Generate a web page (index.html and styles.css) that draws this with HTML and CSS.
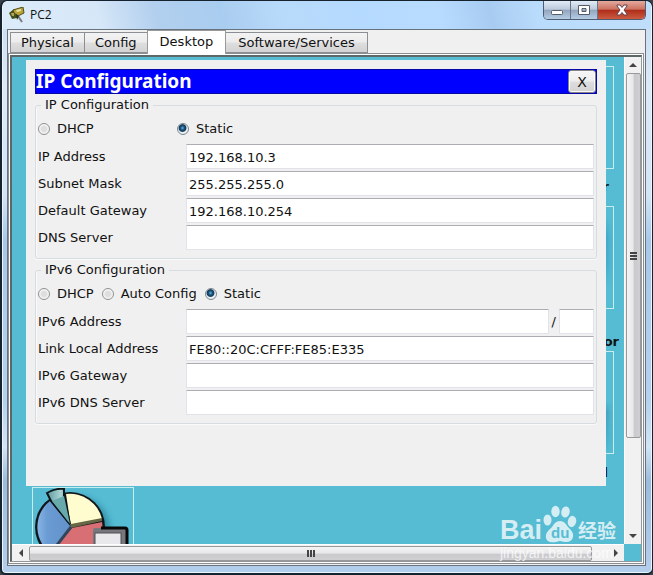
FILE: index.html
```html
<!DOCTYPE html>
<html lang="en">
<head>
<meta charset="utf-8">
<title>PC2</title>
<link rel="stylesheet" href="styles.css">
</head>
<body>
<div class="window">
  <header class="titlebar">
    <svg class="app-icon" width="16" height="16" viewBox="0 0 16 16" aria-hidden="true">
      <path d="M0 6 5 2 11 4 8 11 3 12Z" fill="#43521f"/>
      <path d="M4 3 14 0 15 6 9 9 5 6Z" fill="#b5a23a" stroke="#514d1b"/>
      <path d="M7 3 12 2 12 4 8 5Z" fill="#f0e5a0"/>
      <path d="M2 6 5 6 5 9 3 9Z" fill="#b7a850"/>
      <path d="M9 9 13 15" stroke="#777c80" stroke-width="2"/>
      <path d="M7 7 10 9 8 13Z" fill="#29331d"/>
    </svg>
    <h1 class="window-title">PC2</h1>
    <div class="window-buttons">
      <button class="win-btn" aria-label="Minimize"><svg width="14" height="12" viewBox="0 0 14 12"><rect x="1.500" y="6.500" width="11" height="4" rx="1" fill="#fff" stroke="#555b69"/></svg></button>
      <button class="win-btn" aria-label="Maximize"><svg width="14" height="12" viewBox="0 0 14 12"><path d="M1.500 1.500H12.500V10.500H1.500ZM5 4.500V7.500H9V4.500Z" fill="#fff" fill-rule="evenodd" stroke="#555b69"/></svg></button>
      <button class="win-btn win-close" aria-label="Close"><svg width="14" height="12" viewBox="0 0 14 12"><path d="M2 1H5L7 3.500 9 1H12V2L9 6 12 10V11H9L7 8.500 5 11H2V10L5 6 2 2Z" fill="#fff" stroke="#65414a"/></svg></button>
    </div>
  </header>

  <div class="client">
    <nav class="tabs" role="tablist">
      <button class="tab" role="tab">Physical</button>
      <button class="tab" role="tab">Config</button>
      <button class="tab tab-active" role="tab" aria-selected="true">Desktop</button>
      <button class="tab" role="tab">Software/Services</button>
    </nav>

    <div class="panel">
      <div class="scroll-area">
        <main class="desktop">
          <div class="tile tile-top"></div>
          <span class="caption caption-top">r</span>
          <div class="tile tile-middle"></div>
          <span class="caption caption-middle">or</span>
          <div class="tile tile-bottom"></div>
          <span class="caption caption-bottom">l</span>
          <div class="tile tile-chart">
            <svg width="100" height="74" viewBox="0 0 100 74" aria-hidden="true">
              <defs>
                <linearGradient id="blue" x1="0" x2="1"><stop offset="0" stop-color="#86b4e4"/><stop offset=".3" stop-color="#6a9bd2"/><stop offset="1" stop-color="#6391c9"/></linearGradient>
                <linearGradient id="teal" x1="0" x2="1"><stop offset="0" stop-color="#5f9ca2"/><stop offset=".6" stop-color="#a9d4d4"/><stop offset="1" stop-color="#4b8c92"/></linearGradient>
                <filter id="soft"><feGaussianBlur stdDeviation="3"/></filter>
              </defs>
              <circle cx="43" cy="42" r="34" fill="#1e6f86" opacity=".6" filter="url(#soft)"/>
              <circle cx="37" cy="39" r="35" fill="#10161a"/>
              <path d="M38 39 17 13A33 33 0 0 0 20 67Z" fill="url(#blue)"/>
              <path d="M38 39 33 6A33 33 0 0 1 69 31Z" fill="#fffccf"/>
              <path d="M38 36 69 30V33L38 40Z" fill="#676645"/>
              <path d="M39 40 69 34A33 33 0 0 1 26 71L22 58Z" fill="#d86f74"/>
              <path d="M38 39 24 57" stroke="#31465a" stroke-width="3"/>
              <path d="M14 5Q22 0 31 1L31 8 37 36 18 13Z" fill="url(#teal)" stroke="#0d171a" stroke-width="2"/>
              <path d="M19 13 31 8 37 36Z" fill="#68a9ab"/>
              <path d="M60 74V42Q60 40 62 40H92Q94 40 94 42V74" fill="#76787d"/>
              <path d="M68 40H92Q94 40 94 42V74" fill="none" stroke="#080808" stroke-width="3"/>
              <rect x="62" y="45" width="26" height="30" fill="#e9e9eb" stroke="#4f5053"/>
            </svg>
          </div>

          <section class="dialog" aria-label="IP Configuration">
            <div class="dialog-head">
              <h2 class="dialog-title">IP Configuration</h2>
              <button class="dialog-close">X</button>
            </div>

            <fieldset class="group">
              <legend>IP Configuration</legend>
              <div class="modes modes-wide">
                <label class="mode"><input type="radio" name="ipv4">DHCP</label>
                <label class="mode"><input type="radio" name="ipv4" checked>Static</label>
              </div>
              <div class="fields">
                <label for="ip">IP Address</label><input class="field" id="ip" type="text" value="192.168.10.3">
                <label for="mask">Subnet Mask</label><input class="field" id="mask" type="text" value="255.255.255.0">
                <label for="gateway">Default Gateway</label><input class="field" id="gateway" type="text" value="192.168.10.254">
                <label for="dns">DNS Server</label><input class="field" id="dns" type="text">
              </div>
            </fieldset>

            <fieldset class="group">
              <legend>IPv6 Configuration</legend>
              <div class="modes">
                <label class="mode"><input type="radio" name="ipv6">DHCP</label>
                <label class="mode"><input type="radio" name="ipv6">Auto Config</label>
                <label class="mode"><input type="radio" name="ipv6" checked>Static</label>
              </div>
              <div class="fields">
                <label for="ip6">IPv6 Address</label>
                <div class="prefix-row"><input class="field" id="ip6" type="text"><span>/</span><input class="field field-prefix" type="text" aria-label="Prefix length"></div>
                <label for="local">Link Local Address</label><input class="field" id="local" type="text" value="FE80::20C:CFFF:FE85:E335">
                <label for="gateway6">IPv6 Gateway</label><input class="field" id="gateway6" type="text">
                <label for="dns6">IPv6 DNS Server</label><input class="field" id="dns6" type="text">
              </div>
            </fieldset>
          </section>
        </main>

        <div class="bar bar-v">
          <button class="arrow" aria-label="Scroll up"><svg width="8" height="4" viewBox="0 0 8 4"><path d="M4 0 8 4H0Z"/></svg></button>
          <div class="thumb thumb-v"><svg width="7" height="8" viewBox="0 0 7 8"><path d="M0 0H7V2H0ZM0 3H7V5H0ZM0 6H7V8H0Z"/></svg></div>
          <button class="arrow arrow-end" aria-label="Scroll down"><svg width="8" height="4" viewBox="0 0 8 4"><path d="M0 0H8L4 4Z"/></svg></button>
        </div>
        <div class="bar bar-h">
          <button class="arrow" aria-label="Scroll left"><svg width="4" height="8" viewBox="0 0 4 8"><path d="M4 0V8L0 4Z"/></svg></button>
          <div class="thumb thumb-h"><svg width="8" height="7" viewBox="0 0 8 7"><path d="M0 0H2V7H0ZM3 0H5V7H3ZM6 0H8V7H6Z"/></svg></div>
          <button class="arrow arrow-end" aria-label="Scroll right"><svg width="4" height="8" viewBox="0 0 4 8"><path d="M0 0 4 4 0 8Z"/></svg></button>
        </div>
      </div>
    </div>
  </div>

  <div class="watermark">
    <div class="brand">
      <span class="brand-bai">Bai</span>
      <span class="paw">
        <svg width="34" height="38" viewBox="0 0 34 38" aria-hidden="true"><ellipse cx="4.500" cy="15" rx="4" ry="5.500"/><ellipse cx="12.500" cy="6.500" rx="4.200" ry="5.700"/><ellipse cx="22.500" cy="7" rx="4.200" ry="5.500" transform="rotate(12 22.500 7)"/><ellipse cx="29" cy="16.500" rx="4.200" ry="5.700" transform="rotate(12 29 16.500)"/><path d="M17 16C21 16 23 19 25 22C28 25 31 28 30 32C29 37 24 38 17 36C10 38 4 38 3 33C2 28 6 25 9 22C11 19 13 16 17 16Z"/></svg>
        <span class="brand-du">du</span>
      </span>
      <span class="brand-cn" lang="zh">经验</span>
    </div>
    <div class="brand-url">jingyan.baidu.com</div>
  </div>
</div>
</body>
</html>
```
FILE: styles.css
```css
* {
  box-sizing: border-box;
}

body {
  margin: 0;
  background: #39414a;
  font: 13px/16px "DejaVu Sans", sans-serif;
  color: #111;
}

button,
input {
  font: inherit;
  color: inherit;
  margin: 0;
}

button {
  padding: 0;
}

.window {
  position: relative;
  display: flex;
  flex-direction: column;
  min-height: 100vh;
  padding: 0 6px 7px 5px;
  border: 1px solid #17222f;
  border-width: 1px 1px 2px 2px;
  border-radius: 7px 7px 6px 6px;
  background: linear-gradient(180deg, #c5daf1 0, #dce9f7 15%, #d3e4f6 34%, #a8c8e9 42%, #b5d1ee 70%, #d2e4f5 78%, #9cbbdc 84%, #b4cfec 100%);
  box-shadow: inset 0 0 0 1px #e9f5ff;
}

.titlebar {
  display: flex;
  align-items: flex-start;
  height: 28px;
  margin: 0 -5px 0 -4px;
  padding-left: 6px;
  background: linear-gradient(75deg, #dcebf9 0, #d6e7f8 15%, #b2cfee 24%, #a9cdf0 34%, #b8dafa 43%, #b5daff 55%, #b8dcff 67%, #a8cbf1 75%, #b9dcfc 82%, #c0defa 100%);
  border-radius: 6px 6px 0 0;
}

.app-icon {
  margin-top: 6px;
}

.window-title {
  flex: 1;
  margin: 5px 0 0 5px;
  font: 12px/18px "Open Sans", sans-serif;
}

.window-buttons {
  display: flex;
  height: 19px;
  margin-right: 5px;
  border: 1px solid #4e5b71;
  border-top: 0;
  border-radius: 0 0 5px 5px;
  overflow: hidden;
}

.win-btn {
  display: grid;
  place-items: center;
  width: 27px;
  border: 0;
  border-right: 1px solid #66758b;
  background: linear-gradient(#e1ecf7 0, #bccadb 46%, #93a4bb 50%, #b4cce5 100%);
}

.win-close {
  width: 47px;
  border-right: 0;
  background: linear-gradient(#e4a99e 0, #cd7260 46%, #af2c1a 50%, #cb5b40 100%);
}

.client {
  display: flex;
  flex-direction: column;
  flex: 1;
  border: 1px solid #66737e;
  background: #f0f0f0;
}

.tabs {
  display: flex;
  align-items: flex-end;
  height: 23px;
  padding-left: 2px;
}

.tab {
  height: 21px;
  margin-right: -1px;
  padding: 0 10px;
  border: 1px solid #8b8f94;
  background: linear-gradient(#f3f3f3 0, #ececec 48%, #dfdfdf 52%, #d2d2d2 100%);
}

.tab:last-child {
  padding: 0 12px;
}

.tab-active {
  height: 24px;
  margin-bottom: -1px;
  padding: 0 12px 2px;
  z-index: 1;
  border-color: #999;
  border-bottom: 0;
  background: #fff;
}

.panel {
  display: flex;
  flex: 1;
  margin: 0 1px 1px 0;
  border: 1px solid #8b8f94;
  padding: 1px;
  background: #fff;
}

.scroll-area {
  flex: 1;
  display: grid;
  grid-template: 1fr 17px / 1fr 17px;
  border: 1px solid #737b7b;
  border-width: 2px 1px 1px 2px;
  border-color: #5c6868 #929899 #929899 #5c6868;
  background: #55bcd3;
}

.desktop {
  position: relative;
  overflow: hidden;
  padding: 3px 18px 58px 14px;
  background: #55bcd3;
}

.tile {
  position: absolute;
  width: 102px;
  height: 103px;
  border: 1px solid #c9edec;
}

.tile-top,
.tile-middle,
.tile-bottom {
  right: 10px;
}

.tile-top {
  top: 9px;
}

.tile-middle {
  top: 149px;
  box-shadow: inset -14px 0 10px -7px #55bcd3;
  background: linear-gradient(#55bcd3 10%, #2f8fbd 30%, #3399c2 55%, #55bcd3 80%);
}

.tile-bottom {
  top: 294px;
  box-shadow: inset -14px 0 10px -7px #55bcd3;
  background: linear-gradient(#55bcd3 48%, #3286a8 60%, #3c9dbe 85%, #55bcd3);
}

.tile-chart {
  left: 20px;
  top: 430px;
}

.caption {
  position: absolute;
  font-weight: bold;
}

.caption-top {
  right: 15px;
  top: 122px;
}

.caption-middle {
  right: 5px;
  top: 277px;
}

.caption-bottom {
  right: 16px;
  top: 408px;
}

.dialog {
  position: relative;
  min-height: 426px;
  padding: 9px;
  background: #f0f0f0;
}

.dialog-head {
  display: flex;
  align-items: center;
  justify-content: space-between;
  height: 25px;
  margin-bottom: 3px;
  background: #0000fe;
  border: 1px solid #0808a8;
}

.dialog-title {
  margin: 0;
  font: bold 19px/23px "Noto Sans", sans-serif;
  color: #fff;
}

.dialog-close {
  width: 28px;
  height: 23px;
  border: 1px solid #848484;
  border-radius: 3px;
  background: linear-gradient(#f5f5f5 0, #eee 48%, #dedede 52%, #d3d3d3 100%);
  box-shadow: inset 0 0 0 1px #fafafa;
  font-size: 14px;
}

.group {
  min-width: 0;
  margin: 0 0 3px;
  padding: 4px 2px 8px;
  border: 1px solid #d5dde1;
  border-radius: 3px;
  box-shadow: inset 1px 0 #fafafa, 0 1px #fafafa;
}

.group legend {
  margin-left: 3px;
  padding: 0 4px;
}

.modes {
  display: flex;
  align-items: center;
  gap: 8px;
  height: 24px;
  margin-bottom: 3px;
}

.mode {
  display: flex;
  align-items: center;
  gap: 7px;
}

.modes-wide .mode {
  min-width: 131px;
}

.mode input {
  appearance: none;
  width: 12px;
  height: 12px;
  border: 1px solid #8e8f8f;
  border-radius: 50%;
  background: radial-gradient(circle, #dedede 35%, #f8f8f8 65%);
}

.mode input:checked {
  border-color: #798790;
  background: radial-gradient(circle at 45% 40%, #5fb8e8 0, #194f77 25%, #153a58 42%, #e9eef2 54%);
}

.fields {
  display: grid;
  grid-template-columns: 148px 1fr;
  gap: 2px 0;
  line-height: 25px;
}

.field {
  width: 100%;
  min-width: 0;
  height: 25px;
  padding: 1px 2px 0;
  border: 1px solid #e2e3ea;
  border-top-color: #abadb3;
  border-radius: 1px;
  background: #fff;
}

.prefix-row {
  display: flex;
  gap: 3px;
}

.field-prefix {
  flex: 0 0 35px;
}

.bar {
  display: flex;
  align-items: center;
  background: #f1f1f1;
}

.bar-v {
  flex-direction: column;
  border-left: 1px solid #fff;
}

.bar-h {
  border-top: 1px solid #fff;
}

.arrow {
  display: grid;
  place-items: center;
  width: 17px;
  height: 16px;
  border: 0;
  background: none;
}

.bar-v .arrow-end {
  margin: auto 0 0;
}

.bar-h .arrow-end {
  margin: 0 0 0 auto;
}

.arrow svg,
.thumb svg {
  fill: #444;
}

.thumb {
  display: grid;
  place-items: center;
  border: 1px solid #999;
  border-radius: 2px;
}

.thumb-v {
  width: 15px;
  flex: 0 1 75%;
  background: linear-gradient(90deg, #f5f5f5 0, #e7e7ea 48%, #cacace 54%, #d0d0d2 100%);
}

.thumb-h {
  height: 15px;
  flex: 0 1 92%;
  background: linear-gradient(#f5f5f5 0, #e7e7ea 48%, #cacace 54%, #d0d0d2 100%);
}

.watermark {
  position: absolute;
  right: 36px;
  bottom: 10px;
  color: rgba(255, 255, 255, 0.75);
  pointer-events: none;
}

.brand {
  display: flex;
  align-items: flex-end;
  gap: 1px;
}

.brand-bai {
  font: bold 27px/26px "Liberation Sans", sans-serif;
}

.paw {
  position: relative;
  display: grid;
}

.paw svg {
  fill: currentColor;
}

.brand-du {
  position: absolute;
  left: 8px;
  bottom: 1px;
  font: bold 15px/18px "Liberation Sans", sans-serif;
  color: #55bcd3;
}

.brand-cn {
  font: bold 19px/27px "Noto Sans CJK SC", sans-serif;
}

.brand-url {
  font: 14px/20px "Liberation Sans", sans-serif;
}
```
